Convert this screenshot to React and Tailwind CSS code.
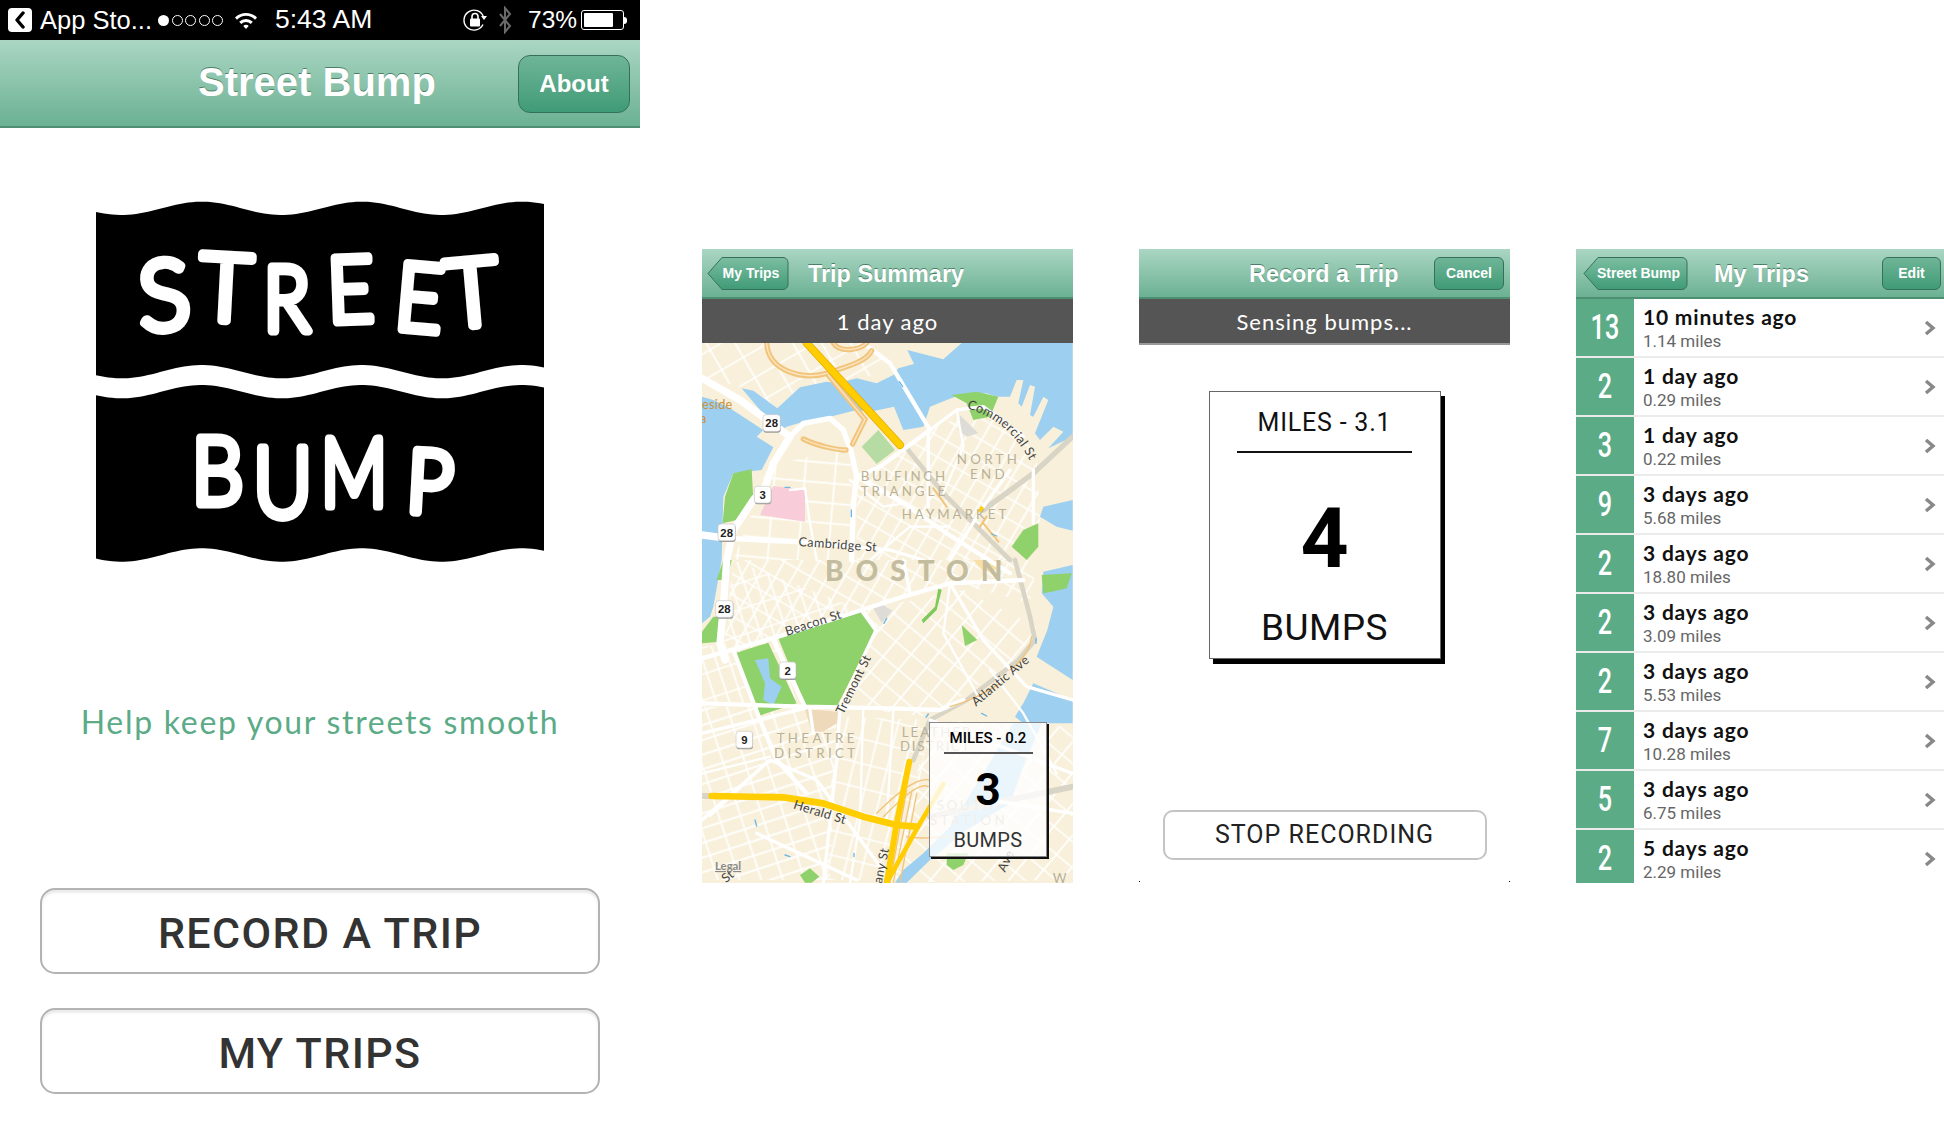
import React from "react";

const helv = "[font-family:'Liberation_Sans',Arial,sans-serif]";

function wavePath(y0) {
  const pts = [];
  for (let x = 48; x <= 1392; x += 12) {
    pts.push([x, y0 + 20 * Math.cos((2 * Math.PI * (x - 125)) / 480)]);
  }
  return pts;
}
function bandPath(top, bottom) {
  const a = wavePath(top);
  const b = wavePath(bottom).reverse();
  return "M" + a.concat(b).map((p) => p[0] + " " + p[1].toFixed(1)).join("L") + "Z";
}

const logoLetters = [
  ["S", 260, 448, 290, 1, -4],
  ["T", 432, 422, 278, 0.98, 3],
  ["R", 620, 452, 270, 0.85, 0],
  ["E", 815, 424, 272, 0.88, -2],
  ["E", 1010, 452, 280, 0.88, 5],
  ["T", 1185, 436, 280, 0.98, -5],
  ["B", 412, 972, 280, 0.88, 0],
  ["U", 608, 1010, 288, 0.85, 0],
  ["M", 822, 978, 282, 0.78, 0],
  ["P", 1045, 998, 262, 0.92, 3],
];

function Logo() {
  return (
    <svg viewBox="0 0 1440 1200" className="block h-[400px] w-[480px]">
      <path d={bandPath(85, 575)} fill="#000" />
      <path d={bandPath(635, 1125)} fill="#000" />
      {logoLetters.map(([c, x, y, s, sx, r], i) => (
        <text
          key={i}
          transform={`translate(${x} ${y}) rotate(${r}) scale(${sx} 1)`}
          textAnchor="middle"
          fontFamily="Lato, sans-serif"
          fontWeight="300"
          fontSize={s}
          fill="#fff"
          stroke="#fff"
          strokeWidth="27"
          strokeLinejoin="round"
          strokeLinecap="round"
        >
          {c}
        </text>
      ))}
    </svg>
  );
}

function StatusBar() {
  return (
    <div className={`flex h-[40px] items-center bg-black text-white ${helv}`}>
      <div className="ml-[8px] flex h-[24px] w-[24px] items-center justify-center rounded-[4px] bg-white">
        <svg width="14" height="18" viewBox="0 0 14 18">
          <path d="M10 2L4 9l6 7" fill="none" stroke="#000" strokeWidth="3.4" strokeLinecap="round" strokeLinejoin="round" />
        </svg>
      </div>
      <span className="ml-[8px] w-[118px] text-[25.5px]">App Sto...</span>
      <div className="flex w-[67px] items-center gap-[2.5px]">
        <span className="h-[11px] w-[11px] rounded-full bg-white" />
        {[0, 1, 2, 3].map((i) => (
          <span key={i} className="h-[11px] w-[11px] rounded-full border border-white" />
        ))}
      </div>
      <svg className="ml-[9px]" width="24" height="18" viewBox="0 0 24 18">
        <path d="M1 6.5a15.5 15.5 0 0 1 22 0l-2 2.2a12.5 12.5 0 0 0-18 0z M5.2 10.8a9.5 9.5 0 0 1 13.6 0l-2.1 2.2a6.5 6.5 0 0 0-9.4 0z M9.3 15a3.6 3.6 0 0 1 5.4 0L12 18z" fill="#fff" />
      </svg>
      <span className="ml-[17px] w-[188px] text-[26.5px]">5:43 AM</span>
      <svg width="25" height="24" viewBox="0 0 25 24">
        <path d="M20 16.5A10 10 0 1 1 20.5 9" fill="none" stroke="#fff" strokeWidth="1.4" />
        <path d="M18 8h6l-3 4z" fill="#fff" />
        <rect x="7" y="10.5" width="10" height="8" rx="1" fill="#fff" />
        <path d="M9 11V8.5a3 3 0 0 1 6 0V11" fill="none" stroke="#fff" strokeWidth="1.6" />
      </svg>
      <svg className="ml-[10px]" width="14" height="28" viewBox="0 0 14 28">
        <path d="M2 8l10 12-5 6V2l5 6L2 20" fill="none" stroke="#6a6a6a" strokeWidth="2" />
      </svg>
      <span className="ml-[16px] w-[50px] text-[24.5px]">73%</span>
      <div className="ml-[3px] flex h-[20px] w-[43px] items-center rounded-[3px] border border-white p-[2px]">
        <div className="h-full w-[29px] rounded-[1px] bg-white" />
      </div>
      <div className="h-[7px] w-[3px] rounded-r-full bg-white" />
    </div>
  );
}

const navBg = "bg-linear-to-b from-[#aad6c3] to-[#6bb193] border-b-2 border-[#4e8e72]";
const btnBg = "bg-linear-to-b from-[#6eb597] to-[#3f9b77] border border-[#37705a]";
const titleShadow = "[text-shadow:0_-1px_0_#4c7f69]";

function MainNav() {
  return (
    <div className={`flex h-[88px] items-center pl-[198px] ${navBg} ${helv}`}>
      <span className={`text-[40px] font-bold leading-none text-white ${titleShadow} mb-[2px] w-[320px]`}>Street Bump</span>
      <div className={`flex h-[58px] w-[112px] items-center justify-center rounded-[12px] text-[24px] font-bold text-white ${btnBg} mb-[-2px]`}>About</div>
    </div>
  );
}

function BackBtn({ label, w, id }) {
  return (
    <div className="relative flex h-[33px] items-center justify-center pl-[6px]" style={{ width: w }}>
      <svg className="absolute inset-0" width={w} height="33">
        <defs>
          <linearGradient id={id} x1="0" y1="0" x2="0" y2="1">
            <stop offset="0" stopColor="#7dbea2" />
            <stop offset="1" stopColor="#3f9b77" />
          </linearGradient>
        </defs>
        <path d={`M1 16.5L15 .5H${w - 6}a5 5 0 0 1 5 5V27.5a5 5 0 0 1-5 5H15Z`} fill={`url(#${id})`} stroke="#37705a" />
      </svg>
      <span className={`relative text-[14px] font-bold text-white ${helv}`}>{label}</span>
    </div>
  );
}

function SmallBtn({ label, w }) {
  return (
    <div className={`flex h-[33px] items-center justify-center rounded-[6px] text-[14px] font-bold text-white ${btnBg} ${helv}`} style={{ width: w }}>
      {label}
    </div>
  );
}

function SmallNav({ children }) {
  return <div className={`flex h-[50px] shrink-0 items-center ${navBg} ${helv}`}>{children}</div>;
}

const title = `text-[23.4px] font-bold leading-none text-white ${titleShadow} mt-[3px]`;
const din = "[font-family:Roboto,sans-serif]";
const round = "[font-family:Lato,sans-serif]";

const A = "#f8f0da";
function Shield({ x, y, t }) {
  const w = t.length > 1 ? 52 : 50;
  return (
    <g>
      <rect x={x - w / 2 + 1} y={y - 24} width={w} height={52} rx="9" fill="#9a9a9a" />
      <rect x={x - w / 2} y={y - 26} width={w} height={50} rx="9" fill="#fff" stroke="#c9c9c9" strokeWidth="2" />
      <text x={x} y={y + 12} textAnchor="middle" fontFamily="Liberation Sans, Arial, sans-serif" fontWeight="700" fontSize="34" fill="#222">{t}</text>
    </g>
  );
}
function Area({ text, x, y, size = 40, sp = 10, w = 400, color = "#b9b197" }) {
  return (
    <text x={x} y={y} fontFamily="Lato, sans-serif" fontWeight={w} fontSize={size} letterSpacing={sp} fill={color}>{text}</text>
  );
}
function Street({ text, x, y, r, size = 38 }) {
  return (
    <text transform={`translate(${x} ${y}) rotate(${r})`} fontFamily="Lato, sans-serif" fontSize={size} fill="#444" letterSpacing="1">{text}</text>
  );
}

const gridDefs = [
  ["pa", 90, 60, 5],
  ["pb", 45, 55, 30],
  ["pc", 75, 70, -30],
  ["pd", 38, 75, -18],
  ["pe", 62, 42, -18],
  ["pf", 60, 60, 40],
  ["pg", 50, 72, 14],
];

function MapView() {
  const water = "#9ccff0";
  const park = "#8fd16a";
  return (
    <svg viewBox="36 309 1113 1620" className="block h-[540px] w-[371px]">
      <defs>
        {gridDefs.map(([id, w, h, r]) => (
          <pattern key={id} id={id} width={w} height={h} patternUnits="userSpaceOnUse" patternTransform={`rotate(${r})`}>
            <path d={`M0 ${h / 2}H${w}M${w / 2} 0V${h}`} stroke="#fff" strokeWidth="5" fill="none" />
          </pattern>
        ))}
      </defs>
      <rect x="36" y="309" width="1113" height="1620" fill={A} />
      {/* street grids */}
      <path d="M230 680L480 620L500 960L130 960L200 780Z" fill="url(#pa)" />
      <path d="M500 720L720 570L880 500L1040 640L1050 850L960 960L500 960Z" fill="url(#pb)" />
      <path d="M36 309L520 309L620 400L440 420L330 440L262 505L150 440L36 410Z" fill="url(#pc)" />
      <g transform="translate(0 960)">
        <path d="M36 260L265 235L320 430L36 440Z" fill="url(#pd)" />
        <path d="M36 440L440 440L420 960L36 960Z" fill="url(#pe)" />
        <path d="M130 0L515 150L265 235L100 270Z" fill="url(#pd)" />
        <path d="M515 150L820 90L1040 200L980 300L720 470L440 440Z" fill="url(#pf)" />
        <path d="M440 470L720 480L640 960L400 960Z" fill="url(#pg)" />
        <path d="M720 480L1148 500L1148 960L600 968Z" fill="url(#pf)" />
        <path d="M130 0H1040L1020 130L800 70L640 110L515 150L270 230L100 270Z" fill="url(#pb)" />
      </g>
      {/* water */}
      <path fill={water} d="M155 445L190 452L262 505L330 442L410 425L445 430L500 415L560 430L610 405L625 385L672 372L652 330L760 358L815 309L1148 309L1148 590L1075 625L1120 575L1090 560L1050 600L1035 580L1075 480L1060 470L1030 530L1020 525L1035 440L1020 435L995 500L985 490L1000 420L980 420L960 470L920 470L890 460L810 465L770 480L720 500L700 560L640 570L612 500L540 515L500 510L420 530L340 545L290 560L265 575Z" />
      <path fill={water} d="M36 470L70 480L120 505L220 570L200 590L235 612L250 622L215 690L130 700L100 770L95 960L70 1100L60 1130L36 1150Z" />
      <path fill={water} d="M1148 780L1060 800L1050 830L1100 860L1148 872Z" />
      <g transform="translate(0 960)">
        <path fill={water} d="M1148 15L1060 35L1055 100L1090 140L1072 210L1040 290L1148 360Z" />
        <path fill={water} d="M1000 430L1030 370L1100 400L1148 420V490H1000L975 470Z" />
        <path fill={water} d="M1055 490H970L880 640L780 800L700 880L640 930L615 968H650L720 900L830 810L960 730L1000 620Z" />
      </g>
      {/* parks */}
      <path fill={park} d="M785 465L860 455L925 470L900 530L850 540L830 490Z" />
      <path fill={park} d="M1000 870L1045 850L1045 920L1010 960L965 920Z" />
      <path fill={park} d="M185 688L130 700L105 770L98 850L140 840L190 780Z" />
      <path fill="#b7dca3" d="M515 620L565 570L615 630L560 672Z" />
      <path fill="#f8ccd9" d="M250 738L345 750L345 845L210 825Z" />
      <path fill="#dedcd6" d="M810 525L865 580L830 590L805 570Z" />
      <g transform="translate(0 960)">
        <path fill={park} d="M265 235L515 155L558 210L440 440L345 435L320 370Z" />
        <path fill={park} d="M135 280L235 248L320 430L205 468Z" />
        <path fill={water} d="M195 300L235 295L240 355L275 380L250 435L220 420L225 370Z" />
        <path fill={park} d="M36 215L70 170L95 170L90 245L36 250Z" />
        <path fill={park} d="M80 60L100 0L125 0L110 60Z" />
        <path fill={park} d="M815 195L862 240L825 258Z" />
        <path fill={park} d="M1055 45L1145 40L1130 85L1085 95L1060 100Z" />
        <path fill={park} d="M770 880H835L820 915L790 930L770 915Z" />
        <path fill={park} d="M330 945L360 925L388 950L365 968L345 968Z" />
        <path fill="#7fc85c" d="M700 190L740 150L755 90L745 85L735 140L695 180Z" />
        <path fill="#eed9ba" d="M345 448L450 455L440 490L400 515L365 515Z" />
        <path fill="#f8dfa6" d="M850 0H930L940 25L880 35Z" />
        <path fill="#dedcd6" d="M550 145L580 135L608 152L575 188Z" />
      </g>
      {/* gray rail */}
      <g fill="none" stroke="#d8d4c6" strokeLinecap="round" strokeLinejoin="round">
        <path strokeWidth="16" d="M1148 590L1030 700L880 810" />
        <path strokeWidth="14" d="M650 625L760 760L960 960" />
        <path strokeWidth="14" transform="translate(0 960)" d="M975 0L1020 170L1035 240L985 300L830 420L720 480L670 600" />
        <path strokeWidth="18" transform="translate(0 960)" d="M36 708H60M1148 680L720 770" />
      </g>
      {/* roads */}
      <g fill="none" stroke="#fff" strokeLinecap="round" strokeLinejoin="round">
        <path strokeWidth="22" d="M36 415L150 480L300 590M300 590L250 670L225 740L190 780L130 870L110 960L100 1100L90 1210L105 1260M115 895L36 885" />
        <path strokeWidth="16" d="M115 895L320 905M300 590L340 550L420 535L460 570L485 640L500 710L490 790L485 960" />
        <path strokeWidth="13" d="M520 309L600 370L660 470L720 570M720 570L570 680L500 710M500 710L640 790L770 880L960 1000" />
        <path strokeWidth="10" d="M720 570L800 510L880 500L1000 590M715 570L715 800M1030 690L1030 850M780 960L880 800L960 690M320 905L600 930L700 960" />
        <path strokeWidth="7" d="M300 750L345 745L360 850L380 960M540 960L660 860L780 860M480 720L580 800L640 790M800 510L820 620L760 760" />
      </g>
      <g transform="translate(0 960)" fill="none" stroke="#fff" strokeLinecap="round" strokeLinejoin="round">
        <path strokeWidth="13" d="M36 295L265 230L515 150L640 110L780 70L1000 60M36 430L340 440L600 445L750 450L820 420M130 270L210 480L260 600L350 700M250 240L345 440M515 150L558 210" />
        <path strokeWidth="10" d="M558 210L450 440L440 600L400 968M780 70L880 240L1010 380L1148 420M640 0L660 100M36 520L345 445M360 450L370 520M36 780L240 600L380 660L600 960M200 820L500 960M720 480L1148 640M1148 760L900 720" />
        <path strokeWidth="7" d="M36 640L240 590M240 600L60 768M520 440L510 780L480 968M610 450L590 790M780 70L760 220L870 420M900 330L1000 460L1100 640" />
      </g>
      {/* orange ramps */}
      <g fill="none" strokeLinecap="round">
        <path stroke="#f2c47c" strokeWidth="16" d="M230 309C235 395 340 420 410 400C470 380 530 365 545 332M340 597C380 617 440 630 468 630M415 405L525 538L488 612M430 309C450 340 510 330 530 309" />
        <path stroke="#fbe7c4" strokeWidth="4" d="M230 309C235 395 340 420 410 400C470 380 530 365 545 332M340 597C380 617 440 630 468 630M415 405L525 538L488 612M430 309C450 340 510 330 530 309" />
        <path stroke="#f2c47c" strokeWidth="6" d="M730 745L770 800M880 850L925 905M870 860L890 830" />
      </g>
      <g transform="translate(0 960)" fill="none" stroke="#f2c47c" strokeWidth="4" strokeLinecap="round">
        <path d="M560 760C620 700 680 650 720 660M580 770C640 710 690 665 715 680M600 968L650 690M630 968L680 700M610 968L665 695M650 830C700 840 740 830 780 830M780 440C850 420 900 390 930 370M1025 230C1020 270 1000 300 960 330" />
      </g>
      {/* yellow highways */}
      <g fill="none" strokeLinecap="round" strokeLinejoin="round">
        <path d="M350 309L630 615" stroke="#e5a900" strokeWidth="24" />
        <path d="M350 309L630 615" stroke="#ffcd00" strokeWidth="20" />
        <path d="M875 805L872 812" stroke="#ffcd00" strokeWidth="12" />
        <g transform="translate(0 960)">
          <path d="M65 708L280 712L400 730L520 770L620 795L680 800" stroke="#ffcd00" strokeWidth="20" />
          <path d="M658 605L620 790L590 968" stroke="#ffcd00" strokeWidth="18" />
          <path d="M760 672L690 790L590 968" stroke="#ffcd00" strokeWidth="14" />
        </g>
      </g>
      {/* one-way arrows */}
      <g fill="none" stroke="#6db7e6" strokeWidth="4" strokeLinecap="round">
        <path d="M628 425L638 440M484 810V830M285 742H300M905 882L920 888" />
        <path transform="translate(0 960)" d="M590 175L582 190M715 462L708 472M875 460L890 468M285 885L300 890M492 880V890M195 780L200 798M1038 235V250" />
      </g>
      {/* labels */}
      <Area text="eside" x="36" y="506" size="38" sp={1} color="#c9913a" />
      <Area text="a" x="30" y="550" size="38" sp={1} color="#c9913a" />
      <Area text="NORTH" x="800" y="672" />
      <Area text="END" x="840" y="716" />
      <Area text="BULFINCH" x="512" y="722" sp={8} />
      <Area text="TRIANGLE" x="512" y="768" sp={9} />
      <Area text="HAYMARKET" x="635" y="837" sp={9} />
      <Area text="BOSTON" x="405" y="1022" size="84" sp={36} w={900} color="#c3bc9f" />
      <Area text="THEATRE" x="260" y="1510" sp={10} />
      <Area text="DISTRICT" x="252" y="1555" sp={10} />
      <Area text="LEATHER" x="635" y="1490" sp={6} />
      <Area text="DISTRICT" x="630" y="1532" sp={5} />
      <Area text="SOUTH" x="740" y="1710" sp={8} />
      <Area text="STATION" x="720" y="1755" sp={10} />
      <Area text="W" x="1088" y="1928" />
      <text fontFamily="Lato, sans-serif" fontSize="34" fontWeight="700" fill="#8a8a8a" x="75" y="1890" textDecoration="underline">Legal</text>
      <path id="comm" d="M830 505Q970 545 1032 690" fill="none" />
      <text fontFamily="Lato, sans-serif" fontSize="38" fill="#444" letterSpacing="1">
        <textPath href="#comm">Commercial St</textPath>
      </text>
      <Street text="Cambridge St" x="325" y="918" r="4" />
      <Street text="Beacon St" x="290" y="1188" r="-18" />
      <Street text="Tremont St" x="460" y="1425" r="-64" />
      <Street text="Atlantic Ave" x="858" y="1400" r="-40" />
      <Street text="Herald St" x="308" y="1705" r="17" />
      <Street text="any St" x="575" y="1932" r="-78" />
      <Street text="St" x="108" y="1930" r="-40" />
      <Street text="Ave" x="945" y="1898" r="-65" />
      <Shield x={245} y={550} t="28" />
      <Shield x={218} y={765} t="3" />
      <Shield x={110} y={878} t="28" />
      <Shield x={103} y={1108} t="28" />
      <Shield x={293} y={1292} t="2" />
      <Shield x={163} y={1500} t="9" />
    </svg>
  );
}

const trips = [
  ["13", "10 minutes ago", "1.14 miles"],
  ["2", "1 day ago", "0.29 miles"],
  ["3", "1 day ago", "0.22 miles"],
  ["9", "3 days ago", "5.68 miles"],
  ["2", "3 days ago", "18.80 miles"],
  ["2", "3 days ago", "3.09 miles"],
  ["2", "3 days ago", "5.53 miles"],
  ["7", "3 days ago", "10.28 miles"],
  ["5", "3 days ago", "6.75 miles"],
  ["2", "5 days ago", "2.29 miles"],
];

function TripRow({ n, t, m }) {
  return (
    <div className="flex h-[59px] shrink-0 border-b-2 border-[#ebebeb]">
      <div className={`flex w-[58px] shrink-0 items-center justify-center bg-[#5cab87] text-white ${din}`}>
        <span className="inline-block scale-x-[0.72] text-[35px] font-medium leading-none">{n}</span>
      </div>
      <div className="flex-1 pl-[9px] pt-[6px]">
        <div className={`text-[21px] font-bold leading-[24px] tracking-[0.8px] text-[#111] ${round}`}>{t}</div>
        <div className={`mt-[2px] text-[17px] leading-[20px] text-[#666] ${din}`}>{m}</div>
      </div>
      <svg className="mr-[8px] self-center" width="12" height="16" viewBox="0 0 12 16">
        <path d="M2 2l7 6-7 6" fill="none" stroke="#888" strokeWidth="3.4" />
      </svg>
    </div>
  );
}

function BigButton({ children }) {
  return (
    <div className={`flex h-[86px] items-center justify-center rounded-[15px] border-2 border-[#b3b3b3] bg-white pt-[4px] text-[43px] font-medium tracking-[1.4px] text-[#333] shadow-[inset_0_3px_2px_#ececec] ${din}`}>
      {children}
    </div>
  );
}

export default function App() {
  return (
    <div className="flex h-[1136px] w-[1944px] items-start overflow-hidden bg-white">
      {/* Phone 1 */}
      <div className="w-[640px] shrink-0">
        <StatusBar />
        <MainNav />
        <div className="ml-[80px] mt-[52px]">
          <Logo />
        </div>
        <div className={`mt-[122px] text-center text-[32px] leading-[40px] tracking-[1.7px] text-[#5bab87] ${round}`}>
          Help keep your streets smooth
        </div>
        <div className="mx-[40px] mt-[146px] flex flex-col gap-[34px]">
          <BigButton>RECORD A TRIP</BigButton>
          <BigButton>MY TRIPS</BigButton>
        </div>
      </div>

      {/* Phone 2 */}
      <div className="relative ml-[62px] mt-[249px] h-[634px] w-[371px] shrink-0 overflow-hidden">
        <SmallNav>
          <div className="ml-[5px] w-[101px]">
            <BackBtn label="My Trips" w={82} id="bb1" />
          </div>
          <span className={title}>Trip Summary</span>
        </SmallNav>
        <div className={`flex h-[44px] items-center justify-center bg-[#555] text-[22px] tracking-[1px] text-white ${round}`}>1 day ago</div>
        <MapView />
        <div className="absolute left-[227px] top-[473px] flex h-[135px] w-[118px] flex-col items-center border border-[#888] bg-white/80 shadow-[2px_2px_0_#111]">
          <div className={`mt-[5px] w-[89px] border-b-2 border-[#555] pb-[4px] text-center text-[15px] font-medium leading-[20px] text-black ${din}`}>MILES - 0.2</div>
          <div className={`mt-[14px] text-[44px] font-bold leading-[44px] text-black ${din}`}>3</div>
          <div className={`mt-[15px] text-[20px] leading-[26px] tracking-[0.3px] text-[#333] ${din}`}>BUMPS</div>
        </div>
      </div>

      {/* Phone 3 */}
      <div className="relative ml-[66px] mt-[249px] h-[634px] w-[371px] shrink-0">
        <SmallNav>
          <span className={`${title} ml-[110px] w-[185px]`}>Record a Trip</span>
          <SmallBtn label="Cancel" w={70} />
        </SmallNav>
        <div className={`flex h-[46px] items-center justify-center border-b-2 border-[#999] bg-[#555] text-[22px] tracking-[1px] text-white ${round}`}>Sensing bumps...</div>
        <div className="mx-auto mt-[46px] flex h-[268px] w-[232px] flex-col items-center border border-[#666] bg-white shadow-[4px_5px_0_#000]">
          <div className={`mt-[12px] w-[175px] border-b-2 border-[#111] pb-[9px] text-center text-[25px] leading-[38px] tracking-[0.8px] text-[#111] ${din}`}>MILES - 3.1</div>
          <div className={`mt-[44px] text-[84px] font-bold leading-[84px] text-black ${din}`}>4</div>
          <div className={`mt-[25px] text-[37px] leading-[44px] tracking-[0.5px] text-[#111] ${din}`}>BUMPS</div>
        </div>
        <div className={`mx-auto mt-[151px] flex h-[50px] w-[324px] items-center justify-center rounded-[10px] border-2 border-[#c4c4c4] bg-white text-[25px] tracking-[1px] text-[#222] ${din}`}>STOP RECORDING</div>
        <span className="absolute bottom-[1px] left-0 h-[1px] w-[1px] bg-black" />
        <span className="absolute bottom-[1px] right-0 h-[1px] w-[1px] bg-black" />
      </div>

      {/* Phone 4 */}
      <div className="ml-[66px] mt-[249px] flex h-[634px] w-[368px] shrink-0 flex-col overflow-hidden">
        <SmallNav>
          <div className="ml-[7px] w-[131px]">
            <BackBtn label="Street Bump" w={105} id="bb2" />
          </div>
          <span className={`${title} w-[168px]`}>My Trips</span>
          <SmallBtn label="Edit" w={59} />
        </SmallNav>
        {trips.map(([n, t, m], i) => (
          <TripRow key={i} n={n} t={t} m={m} />
        ))}
      </div>
    </div>
  );
}
